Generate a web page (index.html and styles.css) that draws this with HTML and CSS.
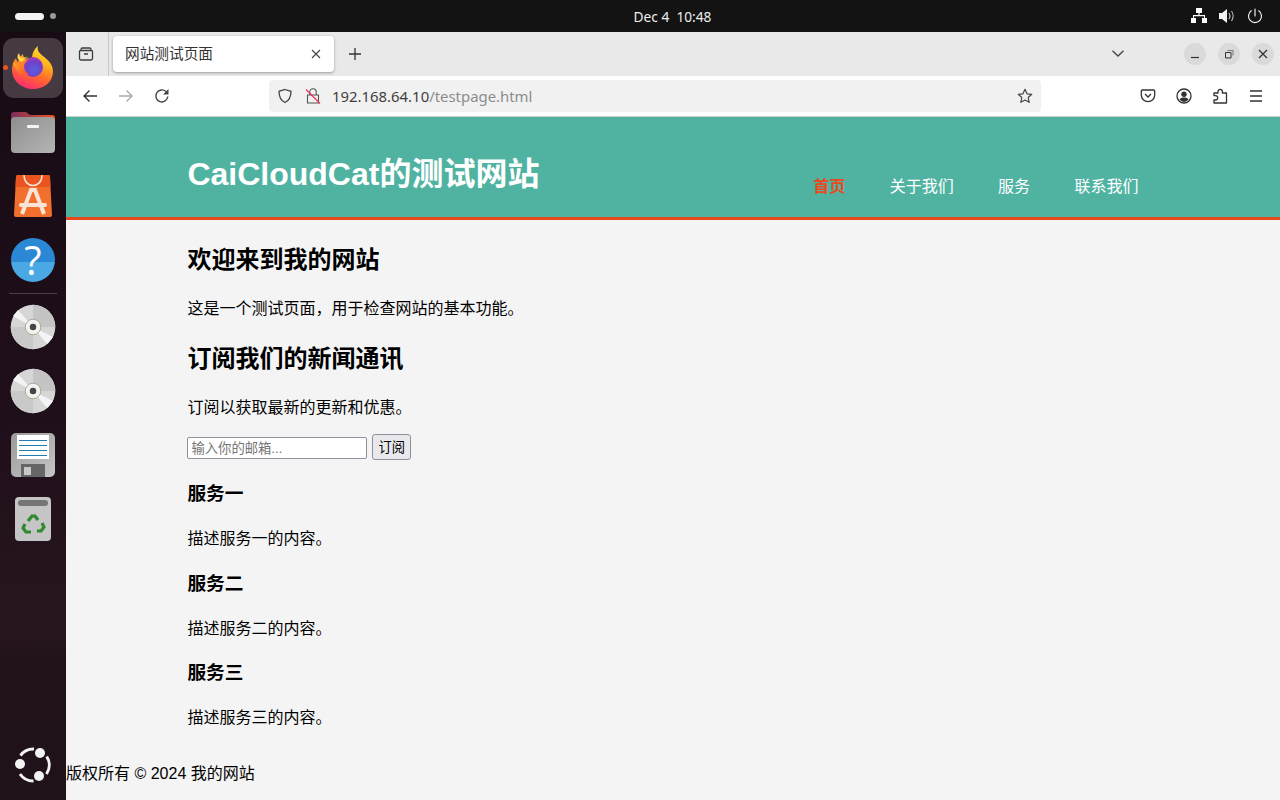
FILE: index.html
```html
<!DOCTYPE html>
<html lang="zh">
<head>
<meta charset="utf-8">
<title>网站测试页面</title>
<link rel="stylesheet" href="styles.css">
</head>
<body>
<div class="topbar">
  <div class="workspaces"><span class="ws-pill"></span><span class="ws-dot"></span></div>
  <div class="clock">Dec 4&nbsp;&nbsp;10:48</div>
  <div class="tray">
    <svg width="18" height="18" viewBox="0 0 18 18"><path fill="#fff" d="M6 1h6v5H9.600v2H15v3h2v5h-5v-5h2V9.200H4V11h2v5H1v-5h2V8h5.400V6H6z"/></svg>
    <svg width="18" height="18" viewBox="0 0 18 18"><path fill="#f2f2f2" d="M1 6h3l5-4v14l-5-4H1z"/><path fill="none" stroke="#bbb" stroke-width="1.100" d="M11 6c1.200 1.800 1.200 4.200 0 6M13.500 4c2 3 2 7 0 10"/></svg>
    <svg width="18" height="18" viewBox="0 0 18 18"><path fill="none" stroke="#eee" stroke-width="1.200" stroke-linecap="round" d="M9 2v7M5.300 3.800a6.500 6.500 0 1 0 7.400 0"/></svg>
  </div>
</div>
<div class="desktop">
  <nav class="dock">
    <div class="dock-item dock-active">
      <span class="run-dot"></span>
      <div class="tile">
        <svg width="46" height="46" viewBox="0 0 46 46">
          <defs>
            <linearGradient id="ffa" x1="0.75" y1="0" x2="0.35" y2="1"><stop offset="0" stop-color="#ffe32a"/><stop offset=".35" stop-color="#ffb21f"/><stop offset=".65" stop-color="#ff6a2a"/><stop offset="1" stop-color="#ff2a72"/></linearGradient>
            <radialGradient id="ffb" cx=".55" cy=".65" r=".6"><stop offset="0" stop-color="#5a5fe0"/><stop offset=".7" stop-color="#7140c8"/><stop offset="1" stop-color="#a23ab8"/></radialGradient>
            <linearGradient id="ffc" x1="0" y1="0" x2="1" y2="1"><stop offset="0" stop-color="#ffb01f"/><stop offset="1" stop-color="#ff4a3a"/></linearGradient>
          </defs>
          <path fill="url(#ffa)" d="M28 1c-1 4 .5 6.500 5 10 6 4.500 10 9 10 15.500C43 37 34 44 23 44 12 44 2 36 2 24.500 2 20 3.500 16 6 13c.3 1.700 1 3 2 4 .6-3 2.500-6 5-8 0 2 .8 3.500 2.500 4.800 2-.8 4.500-1 6.500-.5C22 8.500 24 4 28 1z"/>
          <circle cx="23" cy="22" r="10" fill="url(#ffb)"/>
          <path fill="url(#ffc)" d="M3 17c3 2 7 2 10 0 2-1.500 4-2.500 6-2.500-3 1.500-5 4-5 7 0 3 2 6 5 8-5 1-10-1-13-4.500-2-2.500-3-5-3-8z"/>
          <path fill="#ffd84a" d="M9 8c.5 2.500 1.500 4.500 3.500 5.500 1.500-1 4-2 6-1.800-3 .8-5 2.500-6 4.800-2.500-.2-4.500-1.500-5-4 0-1.800.5-3.300 1.500-4.500z"/>
        </svg>
      </div>
    </div>
    <div class="dock-item">
      <svg width="46" height="46" viewBox="0 0 46 46">
        <defs>
          <linearGradient id="fo1" x1="0" y1="0" x2="1" y2="0"><stop offset="0" stop-color="#7c2d5e"/><stop offset="1" stop-color="#e95420"/></linearGradient>
          <linearGradient id="fo2" x1="0" y1="0" x2="1" y2="1"><stop offset="0" stop-color="#8e8e8e"/><stop offset="1" stop-color="#b5b5b5"/></linearGradient>
        </defs>
        <path fill="url(#fo1)" d="M1 6a3 3 0 0 1 3-3h12l4 3h22a3 3 0 0 1 3 3v14H1z"/>
        <rect x="1" y="8" width="44" height="36" rx="4" fill="url(#fo2)"/>
        <rect x="17" y="16" width="12" height="3" rx="1" fill="#f4f4f4"/>
      </svg>
    </div>
    <div class="dock-item">
      <svg width="40" height="44" viewBox="0 0 40 44">
        <path fill="#f26f2e" d="M5 1h30a2 2 0 0 1 2 2l2 38a2 2 0 0 1-2 2H3a2 2 0 0 1-2-2L3 3a2 2 0 0 1 2-2z"/>
        <path fill="#e95420" d="M5 1h30a2 2 0 0 1 2 2l.5 10H2.500L3 3a2 2 0 0 1 2-2z"/>
        <path fill="none" stroke="#fbe3d6" stroke-width="1.500" d="M11 1c0 14 18 14 18 0"/>
        <path fill="none" stroke="#fbe3d6" stroke-width="4" d="M9 40l9-24h4l9 24"/>
        <path fill="none" stroke="#fbe3d6" stroke-width="4" stroke-linecap="round" d="M8 31h24"/>
      </svg>
    </div>
    <div class="dock-item">
      <div class="help">?</div>
    </div>
    <div class="dock-sep"></div>
    <div class="dock-item">
      <svg width="46" height="46" viewBox="0 0 46 46">
        <circle cx="23" cy="23" r="22.300" fill="#d6d6d6"/>
        <path fill="#c4c4c4" d="M23 .7A22.300 22.300 0 0 1 45.300 23H23z"/>
        <path fill="#c9c9c9" d="M23 45.300A22.300 22.300 0 0 1 .7 23H23z"/>
        <path fill="#f4f4f4" d="M3 12l5-6 15 17zM43 33l-6 7-14-17z"/>
        <circle cx="23" cy="23" r="7.800" fill="#f2f2f2" stroke="#b3a78f"/>
        <circle cx="23" cy="23" r="3.200" fill="#444"/>
      </svg>
    </div>
    <div class="dock-item">
      <svg width="46" height="46" viewBox="0 0 46 46">
        <circle cx="23" cy="23" r="22.300" fill="#d6d6d6"/>
        <path fill="#c4c4c4" d="M23 .7A22.300 22.300 0 0 1 45.300 23H23z"/>
        <path fill="#c9c9c9" d="M23 45.300A22.300 22.300 0 0 1 .7 23H23z"/>
        <path fill="#f4f4f4" d="M3 12l5-6 15 17zM43 33l-6 7-14-17z"/>
        <circle cx="23" cy="23" r="7.800" fill="#f2f2f2" stroke="#b3a78f"/>
        <circle cx="23" cy="23" r="3.200" fill="#444"/>
      </svg>
    </div>
    <div class="dock-item">
      <svg width="46" height="46" viewBox="0 0 46 46">
        <defs><linearGradient id="fl" x1="0" y1="0" x2="1" y2="1"><stop offset="0" stop-color="#9a9a9a"/><stop offset="1" stop-color="#c6c6c6"/></linearGradient></defs>
        <rect x="1" y="1" width="44" height="44" rx="5" fill="url(#fl)"/>
        <rect x="7" y="3" width="32" height="24" fill="#fff"/>
        <path stroke="#1f7fb5" stroke-width="1" d="M9 8.500h28M9 13.500h28M9 18.500h28M9 23.500h28"/>
        <rect x="11" y="32" width="24" height="13" fill="#666"/>
        <rect x="14" y="35" width="7" height="8" fill="#c8c8c8"/>
      </svg>
    </div>
    <div class="dock-item">
      <svg width="38" height="46" viewBox="0 0 38 46">
        <rect x="1" y="1" width="36" height="44" rx="4" fill="#c5c5c5"/>
        <rect x="4" y="4" width="30" height="6" rx="3" fill="#757575"/>
        <g fill="none" stroke="#2f8a2f" stroke-width="3.200">
          <path d="M14 25l4-5h3l3 4"/><path d="M28 27l2 4-3 4h-4"/><path d="M17 36h-5l-3-4 2-4"/>
        </g>
      </svg>
    </div>
    <div class="dock-item dock-bottom">
      <svg width="38" height="38" viewBox="0 0 38 38">
        <g fill="none" stroke="#f2f2f2" stroke-width="3">
          <path d="M6.500 9.500A16 16 0 0 1 20 3"/>
          <path d="M32.700 10.500A16 16 0 0 1 32.500 28"/>
          <path d="M19.500 35A16 16 0 0 1 6 28"/>
        </g>
        <circle cx="6" cy="18" r="5" fill="#f2f2f2"/>
        <circle cx="26" cy="7" r="5" fill="#f2f2f2"/>
        <circle cx="25" cy="30" r="5" fill="#f2f2f2"/>
      </svg>
    </div>
  </nav>
  <div class="browser">
    <div class="tabbar">
      <div class="tablist-btn">
        <svg width="16" height="16" viewBox="0 0 16 16"><path fill="none" stroke="#3d3d3d" stroke-width="1.300" d="M3 4.500V3.500A1.500 1.500 0 0 1 4.500 2h7A1.500 1.500 0 0 1 13 3.500v1M2.500 4.500h11A1 1 0 0 1 14.500 5.500v7a1.500 1.500 0 0 1-1.500 1.500H3a1.500 1.500 0 0 1-1.500-1.500v-7a1 1 0 0 1 1-1zM6 8h4"/></svg>
      </div>
      <div class="tab">
        <span class="tab-title">网站测试页面</span>
        <svg width="10" height="10" viewBox="0 0 10 10"><path stroke="#444" stroke-width="1.100" d="M1 1l8 8M9 1l-8 8"/></svg>
      </div>
      <div class="newtab">
        <svg width="14" height="14" viewBox="0 0 14 14"><path stroke="#333" stroke-width="1.300" d="M7 1v12M1 7h12"/></svg>
      </div>
      <div class="tabbar-right">
        <svg class="chevron" width="12" height="7" viewBox="0 0 12 7"><path fill="none" stroke="#444" stroke-width="1.300" d="M.5.700L6 6 11.500.7"/></svg>
        <div class="winbtns">
          <div class="winbtn"><svg width="10" height="10" viewBox="0 0 10 10"><path stroke="#333" stroke-width="1.200" d="M1 8.500h8"/></svg></div>
          <div class="winbtn"><svg width="10" height="10" viewBox="0 0 10 10"><path fill="none" stroke="#333" d="M1.500 3.500h5.500v5.500H1.500z"/><path fill="none" stroke="#777" d="M3.500 1.500h5.500v5"/></svg></div>
          <div class="winbtn"><svg width="10" height="10" viewBox="0 0 10 10"><path stroke="#333" stroke-width="1.300" d="M1 1l8 8M9 1l-8 8"/></svg></div>
        </div>
      </div>
    </div>
    <div class="navbar">
      <div class="nav-left">
        <svg width="16" height="16" viewBox="0 0 16 16"><path fill="none" stroke="#333" stroke-width="1.400" d="M15 8H2M7.500 2.500L2 8l5.500 5.500"/></svg>
        <svg width="16" height="16" viewBox="0 0 16 16"><path fill="none" stroke="#aaa" stroke-width="1.400" d="M1 8h13M8.500 2.500L14 8l-5.500 5.500"/></svg>
        <svg width="16" height="16" viewBox="0 0 16 16"><path fill="none" stroke="#444" stroke-width="1.400" d="M13.800 8.500A6 6 0 1 1 12 3.600"/><path fill="#444" d="M14.500 1v5.500H9z"/></svg>
      </div>
      <div class="urlbar">
        <svg width="16" height="16" viewBox="0 0 16 16"><path fill="none" stroke="#444" stroke-width="1.300" d="M8 1.500l6 1.800c0 5-1 9-6 11.200C3 12.300 2 8.300 2 3.300z"/></svg>
        <svg class="lock" width="16" height="16" viewBox="0 0 16 16"><path fill="none" stroke="#555" stroke-width="1.100" d="M4.800 7V4a3.200 3.200 0 0 1 6.400 0V7M2.500 7h11v8h-11z"/><path stroke="#ea2a55" stroke-width="1.100" d="M1 1.500l14 14"/></svg>
        <span class="url"><span class="url-host">192.168.64.10</span>/testpage.html</span>
        <svg class="star" width="16" height="16" viewBox="0 0 16 16"><path fill="none" stroke="#444" stroke-width="1.200" stroke-linejoin="round" d="M8 1.300l2 4.500 4.800.5-3.600 3.200 1 4.800L8 12l-4.200 2.300 1-4.800L1.200 6.300 6 5.800z"/></svg>
      </div>
      <div class="nav-right">
        <svg width="16" height="16" viewBox="0 0 16 16"><path fill="none" stroke="#333" stroke-width="1.300" d="M2.300 2h11.400a1 1 0 0 1 1 1v4a6.700 6.700 0 0 1-13.400 0V3a1 1 0 0 1 1-1zM5 6l3 3 3-3"/></svg>
        <svg width="16" height="16" viewBox="0 0 16 16"><circle cx="8" cy="8" r="7" fill="none" stroke="#333" stroke-width="1.300"/><circle cx="8" cy="6.300" r="2.700" fill="#333"/><path fill="#333" d="M3.500 11.500c1-1.500 2.500-2 4.500-2s3.500.5 4.500 2A6 6 0 0 1 8 14a6 6 0 0 1-4.500-2.500z"/></svg>
        <svg width="16" height="16" viewBox="0 0 16 16"><path fill="none" stroke="#333" stroke-width="1.300" stroke-linejoin="round" d="M2 5H6V3.500a2.200 2.200 0 0 1 4.400 0V5H14.500V15H2V12H3.500a2.200 2.200 0 0 0 0-4.400H2z"/></svg>
        <svg width="16" height="16" viewBox="0 0 16 16"><path stroke="#333" stroke-width="1.300" d="M2 3h12M2 8h12M2 13h12"/></svg>
      </div>
    </div>
    <main class="page">
      <header class="site-header">
        <div class="container header-inner">
          <h1>CaiCloudCat的测试网站</h1>
          <ul class="site-nav">
            <li><a class="current" href="#">首页</a></li>
            <li><a href="#">关于我们</a></li>
            <li><a href="#">服务</a></li>
            <li><a href="#">联系我们</a></li>
          </ul>
        </div>
      </header>
      <div class="container">
        <h2>欢迎来到我的网站</h2>
        <p>这是一个测试页面，用于检查网站的基本功能。</p>
        <h2>订阅我们的新闻通讯</h2>
        <p>订阅以获取最新的更新和优惠。</p>
        <form class="subscribe">
          <input type="email" placeholder="输入你的邮箱...">
          <button type="button">订阅</button>
        </form>
        <h3>服务一</h3>
        <p>描述服务一的内容。</p>
        <h3>服务二</h3>
        <p>描述服务二的内容。</p>
        <h3>服务三</h3>
        <p>描述服务三的内容。</p>
      </div>
      <footer class="site-footer">版权所有 © 2024 我的网站</footer>
    </main>
  </div>
</div>
</body>
</html>
```
FILE: styles.css
```css
* { box-sizing: border-box; }
html, body { height: 100%; }
body {
  margin: 0;
  height: 800px;
  overflow: hidden;
  display: flex;
  flex-direction: column;
  font-family: "Liberation Sans", "Noto Sans CJK SC", sans-serif;
  background: #f4f4f4;
}
svg { display: block; flex: none; }

.topbar {
  height: 32px;
  flex: none;
  background: #131313;
  display: grid;
  grid-template-columns: 1fr auto 1fr;
  align-items: center;
  padding: 0 16px 0 15px;
  color: #eee;
  font: 13.7px "Noto Sans", sans-serif;
}
.workspaces { display: flex; align-items: center; gap: 6px; }
.ws-pill { width: 29px; height: 7px; border-radius: 4px; background: #f4f4f4; }
.ws-dot { width: 6px; height: 6px; border-radius: 50%; background: #9a9a9a; }
.clock { margin-left: 66px; }
.tray { display: flex; justify-content: flex-end; gap: 10px; }

.desktop { flex: 1; display: flex; min-height: 0; }

.dock {
  width: 66px;
  flex: none;
  display: flex;
  flex-direction: column;
  padding: 4px 0 3px;
  background: linear-gradient(176deg, #170b14 0%, #1f0f1a 50%, #28161f 78%, #21121b 81%, #1f121a 100%);
}
.dock-item {
  position: relative;
  height: 64px;
  flex: none;
  display: flex;
  align-items: center;
  justify-content: center;
}
.dock-bottom { margin-top: auto; }
.tile {
  width: 60px;
  height: 60px;
  border-radius: 11px;
  background: #453a41;
  display: flex;
  align-items: center;
  justify-content: center;
}
.run-dot {
  position: absolute;
  left: 3px;
  top: 29px;
  width: 5px;
  height: 5px;
  border-radius: 50%;
  background: #e95420;
  z-index: 1;
}
.help {
  width: 44px;
  height: 44px;
  border-radius: 50%;
  background: linear-gradient(180deg, #2a88d4 0 55%, #4aa8e4 55% 100%);
  color: #fff;
  font: 400 40px/44px "Open Sans", sans-serif;
  text-align: center;
}
.dock-sep {
  height: 1px;
  margin: 1px 9px;
  flex: none;
  background: #4a3f47;
}

.browser {
  flex: 1;
  min-width: 0;
  display: flex;
  flex-direction: column;
}
.tabbar {
  height: 44px;
  flex: none;
  background: #e9e9e9;
  display: flex;
  align-items: center;
}
.tablist-btn {
  width: 43px;
  height: 44px;
  display: flex;
  align-items: center;
  justify-content: center;
  border-right: 1px solid #c9c9c9;
  padding-right: 3px;
}
.tab {
  width: 221px;
  height: 36px;
  margin-left: 4px;
  padding: 0 13px 0 12px;
  background: #fff;
  border-radius: 4px;
  box-shadow: 0 1px 3px rgba(0, 0, 0, .35);
  display: flex;
  align-items: center;
  justify-content: space-between;
}
.tab-title { font-size: 14.67px; color: #333; margin-bottom: 4px; }
.newtab { margin-left: 14px; }
.tabbar-right {
  margin-left: auto;
  padding-right: 6px;
  display: flex;
  align-items: center;
}
.chevron { margin-right: 60px; margin-top: -1px; }
.winbtns { display: flex; gap: 12px; }
.winbtn {
  width: 22px;
  height: 22px;
  border-radius: 50%;
  background: #dadada;
  display: flex;
  align-items: center;
  justify-content: center;
}

.navbar {
  height: 41px;
  flex: none;
  background: #fff;
  border-bottom: 1px solid #cfcfcf;
  display: flex;
  align-items: center;
  padding-bottom: 1px;
}
.nav-left { display: flex; gap: 20px; padding-left: 16px; width: 203px; }
.urlbar {
  width: 772px;
  height: 32px;
  background: #f1f1f1;
  border-radius: 4px;
  display: flex;
  align-items: center;
  padding: 0 8px;
}
.lock { margin-left: 12px; }
.url {
  margin-left: 11px;
  font: 14.9px "Noto Sans", sans-serif;
  color: #8c8c8c;
}
.url-host { color: #3f3f3f; }
.star { margin-left: auto; }
.nav-right { display: flex; gap: 20px; padding-left: 99px; }

.page {
  flex: 1;
  min-height: 0;
  overflow: hidden;
  background: #f4f4f4;
  color: #000;
  font-size: 16px;
}
.container { width: 80%; margin: 0 auto; }
.site-header {
  height: 103px;
  background: #50b3a2;
  border-bottom: 3px solid #e8491d;
  color: #fff;
}
.header-inner {
  display: flex;
  justify-content: space-between;
  align-items: flex-start;
}
h1 { margin: 31px 0 0; font-size: 32px; }
.site-nav {
  list-style: none;
  margin: 56px 0 0;
  padding: 0;
}
.site-nav li { display: inline; padding: 0 20px; }
.site-nav a { color: #fff; text-decoration: none; }
.site-nav a.current { color: #e8491d; font-weight: bold; }

h3 { margin: 18.72px 0 19.78px; }

.subscribe { display: flex; align-items: flex-end; gap: 5px; }
.subscribe input {
  width: 180px;
  height: 22px;
  margin-bottom: 1px;
  padding: 2px 3px 0;
  font: 13.33px "Liberation Sans", "Noto Sans CJK SC", sans-serif;
  border: 1px solid #8f8f9d;
  border-radius: 2px;
  background: #fff;
}
.subscribe button {
  height: 26px;
  padding: 1px 5px;
  font: 13.33px "Liberation Sans", "Noto Sans CJK SC", sans-serif;
  color: #000;
  border: 1px solid #8f8f9d;
  border-radius: 3px;
  background: #e9e9ed;
}
.site-footer { margin-top: 32px; }
```
